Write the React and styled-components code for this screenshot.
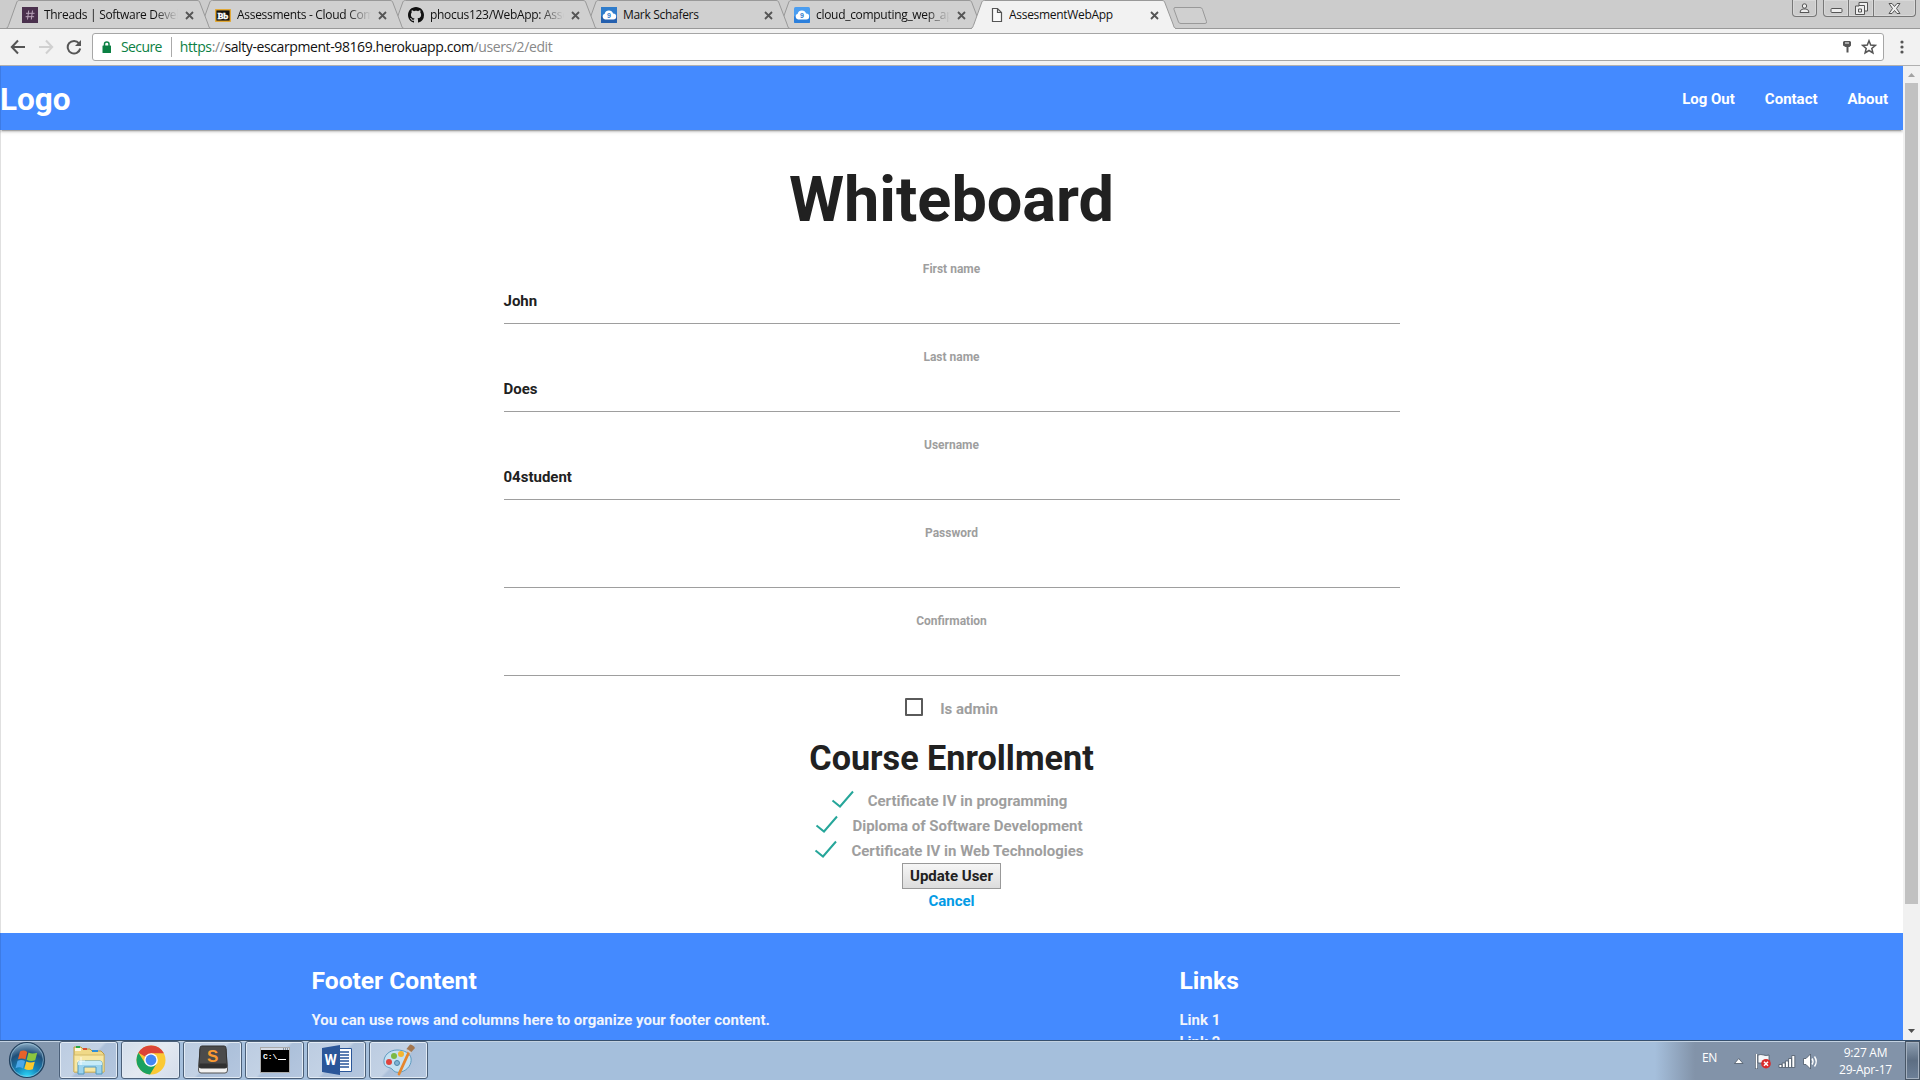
import React from 'react';
import styled, { createGlobalStyle, css } from 'styled-components';

const Global = createGlobalStyle`
  * { box-sizing: border-box; }
  html, body { margin: 0; overflow: hidden; background: #fff; }
`;

const ui = "'Open Sans', 'Noto Sans', sans-serif";

const Screen = styled.div`
  width: 1920px;
  height: 1080px;
  display: flex;
  flex-direction: column;
  overflow: hidden;
  font-family: Roboto, sans-serif;
`;

/* ---------- browser tabs ---------- */
const TabStrip = styled.div`
  flex: none;
  height: 29px;
  display: flex;
  justify-content: space-between;
  background: #ccc;
  border-bottom: 1px solid #999;
`;
const Tabs = styled.div`
  display: flex;
  padding-left: 6px;
  height: 29px;
`;
const Tab = styled.div`
  position: relative;
  z-index: ${(p) => p.$z};
  width: ${(p) => p.$w}px;
  height: 29px;
  margin-left: ${(p) => (p.$first ? 0 : -12)}px;
  padding: 0 17px 0 ${(p) => (p.$active ? 18 : 16)}px;
  display: flex;
  align-items: center;
`;
const TabShape = styled.svg`
  position: absolute;
  left: 0;
  top: 0;
  z-index: -1;
`;
const Favicon = styled.span`
  flex: none;
  width: 16px;
  height: 16px;
  margin-top: 1px;
  svg { display: block; }
`;
const TabTitle = styled.span`
  flex: 1;
  min-width: 0;
  margin: 0 7px 0 ${(p) => (p.$active ? 4 : 6)}px;
  overflow: hidden;
  white-space: nowrap;
  font: 12px/18px ${ui};
  letter-spacing: -0.3px;
  color: #111;
  ${(p) => p.$fade && css`
    mask-image: linear-gradient(90deg, #000 calc(100% - 24px), transparent);
  `}
`;
const CloseIcon = styled.svg`
  flex: none;
  width: 9px;
  height: 9px;
  margin-top: 1px;
`;
const NewTab = styled.svg`
  margin: 6px 0 0 -4px;
`;
const WindowControls = styled.div`
  display: flex;
  align-items: flex-start;
  padding-right: 4px;
`;
const WinButton = styled.div`
  width: ${(p) => p.$w}px;
  height: 17px;
  display: flex;
  align-items: center;
  justify-content: center;
  border: 1px solid #777;
  border-top: 0;
  border-left-width: ${(p) => (p.$joined ? 0 : 1)}px;
  border-radius: ${(p) => p.$r};
  margin-right: ${(p) => p.$gap || 0}px;
  box-shadow: inset 0 0 0 1px #d8d8d8;
`;

/* ---------- toolbar ---------- */
const Toolbar = styled.div`
  flex: none;
  height: 37px;
  display: flex;
  align-items: center;
  background: #f2f2f2;
  border-bottom: 1px solid #b0b0b0;
`;
const NavIcons = styled.div`
  display: flex;
  width: 92px;
  padding-left: 10px;
  gap: 12px;
`;
const UrlBox = styled.div`
  width: 1792px;
  height: 28px;
  display: flex;
  align-items: center;
  padding: 0 6px 0 9px;
  background: #fff;
  border: 1px solid #a6a6a6;
  border-radius: 3px;
  font: 14px/20px ${ui};
  white-space: pre;
`;
const Secure = styled.span`
  margin-left: 9px;
  padding-right: 9px;
  border-right: 1px solid #aaa;
  color: #0b8043;
  letter-spacing: -0.6px;
`;
const Url = styled.span`
  flex: 1;
  margin-left: 8px;
  color: #111;
  letter-spacing: -0.4px;
`;
const Scheme = styled.span`
  color: ${(p) => (p.$green ? '#0b8043' : '#888')};
`;
const UrlActions = styled.div`
  display: flex;
  align-items: center;
  gap: 8px;
`;
const MenuDots = styled.svg`
  margin-left: 15px;
`;

/* ---------- page ---------- */
const Viewport = styled.div`
  flex: none;
  height: 974px;
  display: flex;
  overflow: hidden;
`;
const Page = styled.div`
  width: 1903px;
  height: 974px;
  overflow: hidden;
  font-weight: 700;
  box-shadow: inset 1px 0 0 #e0e0e0;
`;
const Nav = styled.nav`
  height: 64px;
  display: flex;
  align-items: center;
  justify-content: space-between;
  background: #448aff;
  color: #fff;
  box-shadow: inset 1px 0 0 rgba(0,0,0,.1), 0 2px 2px 0 rgba(0,0,0,.14), 0 1px 5px 0 rgba(0,0,0,.12), 0 3px 1px -2px rgba(0,0,0,.2);
`;
const Brand = styled.div`
  font-size: 31.5px;
  line-height: 64px;
  padding-top: 4px;
`;
const NavLinks = styled.div`
  display: flex;
  gap: 30px;
  padding: 2px 15px 0 0;
  font-size: 15px;
`;
const Main = styled.main`
  height: 803px;
  display: flex;
  flex-direction: column;
  align-items: center;
`;
const Title = styled.h1`
  margin: 34px 0 24px;
  font-size: 63px;
  line-height: 71px;
  color: #212121;
`;
const Field = styled.div`
  width: 896px;
  height: 88px;
  display: flex;
  flex-direction: column;
`;
const Label = styled.label`
  text-align: center;
  font-size: 12px;
  line-height: 18px;
  height: 18px;
  color: #9e9e9e;
  margin-top: 1px;
`;
const Value = styled.div`
  height: 46px;
  border-bottom: 1px solid #9e9e9e;
  font-size: 15px;
  line-height: 46px;
  color: #212121;
`;
const AdminRow = styled.div`
  display: flex;
  align-items: center;
  height: 24px;
  margin-top: -2px;
  color: #9e9e9e;
  font-size: 15px;
`;
const Box = styled.span`
  width: 18px;
  height: 18px;
  margin: -4px 17px 0 0;
  border: 2px solid #5a5a5a;
  border-radius: 1px;
`;
const Heading = styled.h2`
  margin: 18px 0 11px;
  font-size: 34.2px;
  line-height: 38px;
  color: #212121;
`;
const Course = styled.div`
  display: flex;
  height: 25px;
  align-items: center;
  padding-right: 5px;
  color: #9e9e9e;
  font-size: 15px;
  svg { margin: -4px 13px 0 0; }
`;
const Submit = styled.button`
  width: 99px;
  height: 26px;
  padding: 0;
  border: 1px solid #999;
  border-radius: 0;
  background: linear-gradient(#f6f6f6, #dcdcdc);
  font: 700 15px/24px Roboto, sans-serif;
  color: #212121;
`;
const Cancel = styled.a`
  color: #039be5;
  font-size: 15px;
  line-height: 24px;
`;
const Footer = styled.footer`
  height: 160px;
  display: flex;
  padding: 33px 0 0 311.5px;
  background: #448aff;
  color: #fff;
  box-shadow: inset 1px 0 0 rgba(0,0,0,.1);
`;
const FooterCol = styled.div`
  width: ${(p) => p.$w}px;
`;
const FooterTitle = styled.h5`
  margin: 0 0 13px;
  font-size: 24.6px;
  line-height: 30px;
`;
const FooterText = styled.div`
  font-size: 15px;
  line-height: 22px;
  color: #f0f4fc;
`;
const Scrollbar = styled.div`
  width: 17px;
  height: 974px;
  display: flex;
  flex-direction: column;
  align-items: center;
  background: #f1f1f1;
`;
const Arrow = styled.svg`
  flex: none;
  display: block;
`;
const Thumb = styled.div`
  width: 13px;
  height: 821px;
  margin-bottom: auto;
  background: #c1c1c1;
`;

/* ---------- taskbar ---------- */
const Taskbar = styled.div`
  flex: none;
  height: 40px;
  display: flex;
  border-top: 1px solid #36506e;
  background: linear-gradient(90deg, #8497ae 0, #8497ae 58px, #a5bfdc 62px, #a5bfdc 1655px, #8293a9 1695px);
  box-shadow: inset 0 1px 0 #c3d2e2;
`;
const Start = styled.div`
  width: 59px;
  padding-left: 8px;
`;
const TaskButton = styled.div`
  width: 59px;
  height: 38px;
  margin-right: 3px;
  display: flex;
  align-items: center;
  justify-content: center;
  border: 1px solid #4b5f78;
  border-radius: 3px;
  box-shadow: inset 0 0 0 1px #e2ebf5;
  background: ${(p) => (p.$active
    ? 'linear-gradient(135deg, #d3deeb, #e3e9f1 50%, #d3dcea)'
    : 'linear-gradient(135deg, #bccce1 0, #c3d2e5 48%, #acc0da 52%, #b5c7df)')};
`;
const Tray = styled.div`
  flex: 1;
  display: flex;
  justify-content: flex-end;
  color: #fff;
  font: 12px/17px ${ui};
`;
const Lang = styled.span`
  margin: 8px 16px 0 0;
  letter-spacing: -0.3px;
`;
const TrayIcons = styled.svg`
  margin-right: 18px;
`;
const Clock = styled.div`
  width: 57px;
  margin-right: 11px;
  padding-top: 3px;
  text-align: center;
  letter-spacing: -0.25px;
  white-space: nowrap;
`;
const ShowDesktop = styled.div`
  width: 15px;
  height: 39px;
  border: 1px solid #485666;
  box-shadow: inset 0 0 0 1px #a4b0bf;
  background: linear-gradient(#8fa0b3, #5d6e83 50%, #6d8098);
`;

const SlackIcon = () => (
  <svg width="16" height="16"><rect width="16" height="16" fill="#4a304d" />
    <path d="M6.7 3.5 5.5 12.5M10.5 3.5 9.3 12.5M4 6.3h8.5M3.6 9.7h8.5" stroke="#b9a5bb" strokeWidth="1" /></svg>
);
const BbText = styled.text`
  font: 700 9px 'Liberation Serif', serif;
  letter-spacing: -0.3px;
`;
const BbIcon = () => (
  <svg width="16" height="16"><rect x=".75" y="2.75" width="14.5" height="11.5" fill="#111" stroke="#e8a92c" strokeWidth="1.3" />
    <BbText x="2.6" y="11.5" fill="#fff" stroke="#fff" strokeWidth=".4">Bb</BbText></svg>
);
const GithubIcon = () => (
  <svg width="16" height="16" viewBox="0 0 16 16"><path fill="#111" d="M8 0C3.58 0 0 3.58 0 8c0 3.54 2.29 6.53 5.47 7.59.4.07.55-.17.55-.38 0-.19-.01-.82-.01-1.49-2.01.37-2.53-.49-2.69-.94-.09-.23-.48-.94-.82-1.13-.28-.15-.68-.52-.01-.53.63-.01 1.08.58 1.23.82.72 1.21 1.87.87 2.33.66.07-.52.28-.87.51-1.07-1.78-.2-3.64-.89-3.64-3.95 0-.87.31-1.59.82-2.15-.08-.2-.36-1.02.08-2.12 0 0 .67-.21 2.2.82.64-.18 1.32-.27 2-.27s1.36.09 2 .27c1.53-1.04 2.2-.82 2.2-.82.44 1.1.16 1.92.08 2.12.51.56.82 1.27.82 2.15 0 3.07-1.87 3.75-3.65 3.95.29.25.54.73.54 1.48 0 1.07-.01 1.93-.01 2.2 0 .21.15.46.55.38A8.01 8.01 0 0 0 16 8c0-4.42-3.58-8-8-8z" /></svg>
);
const NineText = styled.text`
  font: 700 7px 'Liberation Sans', sans-serif;
`;
const CloudIcon = ({ light }) => (
  <svg width="16" height="16"><rect width="16" height="16" rx={light ? 1.5 : 0} fill={light ? '#4a9df0' : '#2f7ccb'} />
    <rect y="9" width="16" height="7" rx="1" fill={light ? '#2b7fdc' : '#245fae'} />
    <path d="M4 12.5a3 3 0 0 1-.3-5.8 4.4 4.4 0 0 1 8.4-.2 3 3 0 0 1 .2 6z" fill="#fff" />
    <NineText x="6" y="11" fill="#2f7ccb">9</NineText></svg>
);
const FileIcon = () => (
  <svg width="16" height="16"><path d="M3.5 1.5h5l4 4v9h-9zM8.5 1.5v4h4" fill="#fafafa" stroke="#555" strokeWidth="1.2" /></svg>
);

const TABS = [
  { title: 'Threads | Software Devel', icon: <SlackIcon />, fade: true },
  { title: 'Assessments - Cloud Com', icon: <BbIcon />, fade: true },
  { title: 'phocus123/WebApp: Asse', icon: <GithubIcon />, fade: true },
  { title: 'Mark Schafers', icon: <CloudIcon /> },
  { title: 'cloud_computing_wep_ap', icon: <CloudIcon light />, fade: true },
  { title: 'AssesmentWebApp', icon: <FileIcon />, active: true },
];

const BrowserTab = ({ tab, index }) => {
  const w = 205;
  return (
    <Tab $w={w} $z={tab.active ? 20 : 10 - index} $first={index === 0} $active={tab.active}>
      <TabShape width={w} height="29">
        <path d={`M0 28.5 C2 28 2 26 3 24 L10.5 3 C11 1 12 .5 13.5 .5 H${w - 14} C${w - 12.5} .5 ${w - 11.5} 1 ${w - 11} 3 L${w - 3} 24 C${w - 2} 27 ${w - 2} 28 ${w} 28.5`}
          fill={tab.active ? '#f2f2f2' : '#d0d0d0'} stroke="#999" />
        {tab.active
          ? <path d={`M1 28.5H${w - 1}`} stroke="#f2f2f2" />
          : <path d={`M0 28.5H${w}`} stroke="#999" />}
      </TabShape>
      <Favicon>{tab.icon}</Favicon>
      <TabTitle $fade={tab.fade} $active={tab.active}>{tab.title}</TabTitle>
      <CloseIcon viewBox="0 0 9 9"><path d="M1 1l7 7M8 1l-7 7" stroke="#555" strokeWidth="1.8" /></CloseIcon>
    </Tab>
  );
};

const Check = () => (
  <svg width="24" height="18"><path d="M1.5 10.5 L9 16.5 L22 1.5" fill="none" stroke="#26a69a" strokeWidth="2" /></svg>
);

const StartOrb = () => (
  <svg width="38" height="38" viewBox="0 0 38 38">
    <defs>
      <radialGradient id="orb" cx=".5" cy="1" r="1"><stop offset="0" stopColor="#2fe0ff" /><stop offset=".35" stopColor="#1483b8" /><stop offset=".7" stopColor="#204f79" /><stop offset="1" stopColor="#8fb0c8" /></radialGradient>
    </defs>
    <circle cx="19" cy="19" r="17.5" fill="url(#orb)" stroke="#23415e" strokeWidth="1.2" />
    <circle cx="19" cy="19" r="16.4" fill="none" stroke="#9fc4da" strokeOpacity=".6" />
    <path d="M12 10.5c3-1.5 5-1 7.300.4l-1.900 7.600c-2.300-1.300-4.400-1.500-7.400-.3z" fill="#e8622a" />
    <path d="M20.500 11.500c2.500 1.400 5.500 1.300 8.700.2l-2 7.500c-3 1.200-5.700 1-8.500-.4z" fill="#8cc63f" />
    <path d="M9.600 19.700c3-1.200 5-1 7.400.3l-2 7.500c-2.400-1.400-4.600-1.500-7.500-.3z" fill="#4ba7e8" />
    <path d="M18.300 20.400c2.700 1.400 5.500 1.500 8.500.3l-2 7.500c-3 1.200-5.800 1-8.500-.4z" fill="#fbc92e" />
  </svg>
);
const Explorer = () => (
  <svg width="34" height="32" viewBox="0 0 34 32">
    <path d="M2 3h7l2 2h7l2 2h9l3 3v18H2z" fill="#f0d988" stroke="#b89b48" />
    <path d="M3 4h6v3H3z" fill="#fff8dc" /><path d="M4 2h4v2H4z" fill="#27a844" /><path d="M11 4h4v2h-4z" fill="#d94c32" /><path d="M20 6h6v2h-6z" fill="#2e8fd8" />
    <path d="M2 11h30v17H2z" fill="#f7e7a4" stroke="#d4ba68" />
    <path d="M6 30V19q0-2 2-2h20q2 0 2 2v11h-6v-7H12v7z" fill="#9bd3ee" stroke="#5199bd" />
    <path d="M6 19q0-2 2-2h20q2 0 2 2v2H6z" fill="#c6ebf9" />
    <path d="M9 13v8M5 17h8" stroke="#fff" strokeOpacity=".8" />
  </svg>
);
const Chrome = () => (
  <svg width="30" height="30" viewBox="0 0 30 30">
    <circle cx="15" cy="15" r="14.500" fill="#fbc934" />
    <path d="M15 15 2.400 7.800A14.500 14.500 0 0 1 27.900 8.300H15z" fill="#dc4437" />
    <path d="M2.400 7.800A14.500 14.500 0 0 0 14 29.500L20.800 18.300 9.200 18.300z" fill="#1aa260" />
    <circle cx="15" cy="15" r="6.800" fill="#fff" /><circle cx="15" cy="15" r="5.400" fill="#4587f3" />
  </svg>
);
const SublimeText = styled.text`
  font: 700 17px 'Liberation Sans', sans-serif;
`;
const Sublime = () => (
  <svg width="32" height="32" viewBox="0 0 32 32">
    <path d="M3 5 1.500 26q0 3 2.500 3h24q2.500 0 2.500-3L29 5z" fill="#f2f2f2" stroke="#555" />
    <path d="M5 2h22q2 0 2 2l1 18q0 2-2 2H4q-2 0-2-2L3 4q0-2 2-2z" fill="#4b4b4b" stroke="#333" />
    <path d="M3 19.500h26l1 2.500q0 2-2 2H4q-2 0-2-2z" fill="#303030" />
    <SublimeText x="10" y="17.500" fill="#f99a32">S</SublimeText>
  </svg>
);
const CmdText = styled.text`
  font: 700 8px 'Liberation Mono', monospace;
`;
const Cmd = () => (
  <svg width="32" height="28" viewBox="0 0 32 28">
    <rect x="1.500" y="1.500" width="29" height="25" fill="#000" stroke="#aaa" />
    <path d="M2 2h28v2H2z" fill="#d5dbe5" /><path d="M24 3h1M26 3h1M28 3h1" stroke="#345" />
    <CmdText x="4" y="13" fill="#fff">C:\</CmdText><path d="M19 13.500h8" stroke="#fff" />
  </svg>
);
const WordText = styled.text`
  font: 700 14px Roboto, sans-serif;
`;
const Word = () => (
  <svg width="32" height="32" viewBox="0 0 32 32">
    <path d="M16 4.500h14.500v23H16z" fill="#fff" stroke="#2a5699" />
    <path d="M19 8h9M19 11h9M19 14h9M19 17h9M19 20h9M19 23h9" stroke="#2a5699" strokeWidth="1.500" />
    <path d="M1 4 19 1v30L1 28z" fill="#2a5699" /><WordText x="3.500" y="21" fill="#fff">W</WordText>
  </svg>
);
const Paint = () => (
  <svg width="34" height="34" viewBox="0 0 34 34">
    <path d="M15 7C7 7 1 13 2 20c1 5 6 4 8 6 2 3 5 4 9 3 7-2 11-8 10-14-1-5-7-8-14-8z" fill="#c5e1f2" stroke="#5f9bbf" />
    <circle cx="7" cy="19" r="3" fill="#e0443c" /><circle cx="12" cy="13" r="3" fill="#7cb944" /><circle cx="19" cy="11" r="3" fill="#f3b631" /><circle cx="15" cy="20" r="2.500" fill="#7fb3d5" stroke="#4d86a9" />
    <path d="M27 9 17 31" stroke="#e5862d" strokeWidth="2.800" strokeLinecap="round" />
    <path d="M24.500 6 28 1.500q3 0 5 3.500l-4.500 5z" fill="#a3764f" /><path d="m25 7 4 3" stroke="#ccc" strokeWidth="2" />
  </svg>
);

const APPS = [
  { icon: <Explorer /> }, { icon: <Chrome />, active: true }, { icon: <Sublime /> },
  { icon: <Cmd /> }, { icon: <Word /> }, { icon: <Paint /> },
];
const FIELDS = [['First name', 'John'], ['Last name', 'Does'], ['Username', '04student'], ['Password', ''], ['Confirmation', '']];
const COURSES = ['Certificate IV in programming', 'Diploma of Software Development', 'Certificate IV in Web Technologies'];

export default function App() {
  return (
    <Screen>
      <Global />
      <TabStrip>
        <Tabs>
          {TABS.map((t, i) => <BrowserTab key={t.title} tab={t} index={i} />)}
          <NewTab width="38" height="19"><path d="M3 1.500h25q2 0 2.500 2l4 12q.5 2-1.500 2H9q-2 0-2.500-1.500L2 3.500q-.5-2 1-2z" fill="#d0d0d0" stroke="#999" /></NewTab>
        </Tabs>
        <WindowControls>
          <WinButton $w={25} $r="0 0 4px 4px" $gap={6}>
            <svg width="11" height="11"><circle cx="5.500" cy="3" r="2.200" fill="#eee" stroke="#555" /><path d="M1 9.500q0-3 3-3.500h3q3 .5 3 3.500z" fill="#eee" stroke="#555" /></svg>
          </WinButton>
          <WinButton $w={26} $r="0 0 0 4px"><svg width="13" height="11"><rect x="1" y="5.500" width="11" height="4" rx="1" fill="#eee" stroke="#555" /></svg></WinButton>
          <WinButton $w={25} $joined $r="0"><svg width="13" height="13"><path d="M4 .5h8.500V9H9.500v3.500H.5V4H4z" fill="#eee" stroke="#555" /><path d="M4 3.500h5.500V9M3.500 7h3v3h-3z" fill="none" stroke="#555" /></svg></WinButton>
          <WinButton $w={42} $joined $r="0 0 4px 0"><svg width="13" height="11"><path d="M1 .5h3l2.500 3 2.500-3h3L8.500 5.500l3.500 5H9l-2.500-3-2.500 3H1l3.500-5z" fill="#eee" stroke="#555" /></svg></WinButton>
        </WindowControls>
      </TabStrip>
      <Toolbar>
        <NavIcons>
          <svg width="16" height="16"><path d="M15 8H2M8 1.500 1.800 8 8 14.500" fill="none" stroke="#555" strokeWidth="2" /></svg>
          <svg width="16" height="16"><path d="M1 8h13M8 1.500 14.200 8 8 14.500" fill="none" stroke="#d0d0d0" strokeWidth="2" /></svg>
          <svg width="16" height="16"><path d="M13 4.300A6.300 6.300 0 1 0 14.200 9.500" fill="none" stroke="#555" strokeWidth="2" /><path d="M15 1v6H9z" fill="#555" /></svg>
        </NavIcons>
        <UrlBox>
          <svg width="10" height="13"><rect x=".5" y="4.500" width="8.500" height="7.500" rx=".5" fill="#0b8043" /><path d="M2.500 5V3q0-2 2.250-2t2.250 2v2" fill="none" stroke="#0b8043" strokeWidth="1.500" /></svg>
          <Secure>Secure</Secure>
          <Url><Scheme $green>https</Scheme><Scheme>://</Scheme>salty-escarpment-98169.herokuapp.com<Scheme>/users/2/edit</Scheme></Url>
          <UrlActions>
            <svg width="12" height="14"><path d="M3 1h6l1 1v3.500L8.500 7H7.500v5.500H5.500V7H4.500L2 5.500V2z" fill="#555" /><path d="M4 3h4" stroke="#fff" /></svg>
            <svg width="16" height="16"><path d="m8 1.800 1.700 4.300 4.600.3-3.500 3 1.100 4.500L8 11.500l-3.900 2.400 1.100-4.500-3.500-3 4.600-.3z" fill="none" stroke="#555" strokeWidth="1.500" /></svg>
          </UrlActions>
        </UrlBox>
        <MenuDots width="6" height="16"><circle cx="3" cy="3" r="1.600" fill="#555" /><circle cx="3" cy="8" r="1.600" fill="#555" /><circle cx="3" cy="13" r="1.600" fill="#555" /></MenuDots>
      </Toolbar>
      <Viewport>
        <Page>
          <Nav>
            <Brand>Logo</Brand>
            <NavLinks><span>Log Out</span><span>Contact</span><span>About</span></NavLinks>
          </Nav>
          <Main>
            <Title>Whiteboard</Title>
            {FIELDS.map(([l, v]) => <Field key={l}><Label>{l}</Label><Value>{v}</Value></Field>)}
            <AdminRow><Box />Is admin</AdminRow>
            <Heading>Course Enrollment</Heading>
            {COURSES.map((c) => <Course key={c}><Check />{c}</Course>)}
            <Submit>Update User</Submit>
            <Cancel>Cancel</Cancel>
          </Main>
          <Footer>
            <FooterCol $w={868}>
              <FooterTitle>Footer Content</FooterTitle>
              <FooterText>You can use rows and columns here to organize your footer content.</FooterText>
            </FooterCol>
            <FooterCol $w={300}>
              <FooterTitle>Links</FooterTitle>
              <FooterText>Link 1</FooterText>
              <FooterText>Link 2</FooterText>
            </FooterCol>
          </Footer>
        </Page>
        <Scrollbar>
          <Arrow width="17" height="17"><path d="M5 11h7L8.500 7z" fill="#a3a3a3" /></Arrow>
          <Thumb />
          <Arrow width="17" height="17"><path d="M5 6h7l-3.500 4z" fill="#505050" /></Arrow>
        </Scrollbar>
      </Viewport>
      <Taskbar>
        <Start><StartOrb /></Start>
        {APPS.map((a, i) => <TaskButton key={i} $active={a.active}>{a.icon}</TaskButton>)}
        <Tray>
          <Lang>EN</Lang>
          <TrayIcons width="86" height="39">
            <path d="M1.500 22.500h8.500L5.750 17.500z" fill="#fff" stroke="#4b5867" strokeWidth=".8" />
            <path d="M23.500 13v15" stroke="#4b5867" strokeWidth="3" /><path d="M23.500 13v14.500" stroke="#fff" strokeWidth="1.600" />
            <path d="M25 14q3-1 5.500 0t5.500 0v8H25z" fill="#f5f7fa" stroke="#4b5867" strokeWidth=".8" />
            <circle cx="33" cy="22.700" r="4.800" fill="#d92b2b" /><path d="m31 20.700 4 4m0-4-4 4" stroke="#fff" strokeWidth="1.500" />
            <path d="M46 26.500v-3h3v3zM49.200 26.500v-4.500h3v4.500zM52.400 26.500v-6.500h3v6.500zM55.600 26.500v-9h3v9zM58.800 26.500V14.500h3v12z" fill="#fff" stroke="#4b5867" strokeWidth=".8" />
            <path d="M70.500 17.500h2.500l4.500-4.500v15l-4.500-4.500h-2.500z" fill="#fff" stroke="#4b5867" strokeWidth=".8" /><path d="M79 17.500q2 3 0 6M81.500 15.500q3.500 5 0 10" stroke="#fff" fill="none" strokeWidth="1.400" />
          </TrayIcons>
          <Clock>9:27 AM<br />29-Apr-17</Clock>
          <ShowDesktop />
        </Tray>
      </Taskbar>
    </Screen>
  );
}
